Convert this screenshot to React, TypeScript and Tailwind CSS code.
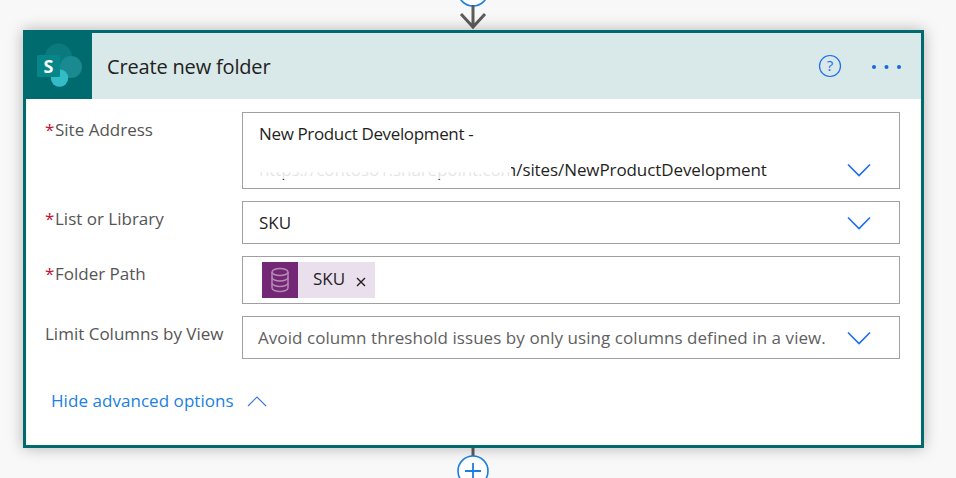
import React from "react";

const font = { fontFamily: '"Open Sans","Noto Sans",sans-serif' };

function Chevron() {
  return (
    <svg width="24" height="14" viewBox="0 0 24 14" className="shrink-0" fill="none">
      <path d="M1 1.5 L12 12.5 L23 1.5" stroke="#1a6df0" strokeWidth="1.6" />
    </svg>
  );
}

function Label({ text, required }: { text: string; required?: boolean }) {
  return (
    <div className="w-[197px] shrink-0 flex items-start text-[17px] leading-[24px] text-[#555555]">
      {required && <span className="text-[#c8102e] w-[10px]">*</span>}
      <span>{text}</span>
    </div>
  );
}

function SharePointLogo() {
  return (
    <svg width="66" height="66" viewBox="0 0 66 66" className="block">
      <circle cx="32.5" cy="24" r="13.5" fill="#0a7a7e" />
      <circle cx="45" cy="34" r="11" fill="#1a8a90" />
      <circle cx="33.5" cy="45" r="8.7" fill="#33bcc6" />
      <rect x="11" y="22" width="23" height="22" rx="1.5" fill="#07868a" />
      <text x="22.5" y="39.5" textAnchor="middle" fontSize="18" fontWeight="700" fill="#ffffff" fontFamily="Open Sans">S</text>
    </svg>
  );
}

export default function App() {
  return (
    <div className="w-[956px] h-[478px] bg-[#f8f8f8] overflow-hidden flex flex-col items-start pl-[23px]" style={font}>
      <svg width="901" height="30" viewBox="0 0 901 30" className="shrink-0 block">
        <circle cx="450" cy="-9" r="15" fill="#fff" stroke="#1a7fe0" strokeWidth="1.6" />
        <path d="M450 5 V28 M438 14 L450 27 L462 14" stroke="#5c5c5c" strokeWidth="3" fill="none" />
      </svg>

      <div className="w-[901px] h-[418px] shrink-0 border-[3px] border-[#006b6e] bg-white shadow-[0_0_14px_rgba(0,0,0,0.28)] flex flex-col relative">
        <div className="h-[66px] shrink-0 bg-[#d9e8e8] flex items-center">
          <div className="w-[66px] h-[66px] bg-[#006b6e]">
            <SharePointLogo />
          </div>
          <div className="ml-[15px] text-[20px] text-[#212121] flex-1 tracking-[-0.17px] pt-[2px]">Create new folder</div>
          <svg width="24" height="24" viewBox="0 0 24 24" className="mr-[29px]" fill="none">
            <circle cx="12" cy="12" r="10.5" stroke="#1a6df0" strokeWidth="1.2" />
            <text x="12" y="17" textAnchor="middle" fontSize="15" fill="#1a6df0" fontFamily="Open Sans">?</text>
          </svg>
          <svg width="32" height="6" viewBox="0 0 32 6" className="mr-[18px] mt-[2px]">
            <circle cx="3" cy="3" r="2" fill="#0f6cdc" />
            <circle cx="15.5" cy="3" r="2" fill="#0f6cdc" />
            <circle cx="28" cy="3" r="2" fill="#0f6cdc" />
          </svg>
        </div>

        <div className="flex flex-col gap-[12px] pt-[13px] pl-[19px] pr-[21px]">
          <div className="flex items-start">
            <div className="pt-[6px]"><Label text="Site Address" required /></div>
            <div className="w-[658px] h-[77px] border border-[#a0a0a0] pl-[16px] pr-[28px] flex flex-col justify-between relative">
              <div className="text-[17px] leading-[22px] mt-[10px] text-[#1f1f1f] tracking-[-0.36px]">New Product Development -</div>
              <div className="flex items-center justify-between mb-[7px]">
                <span className="text-[17px] leading-[22px] text-[#1f1f1f] tracking-[-0.09px]">https://contoso1.sharepoint.com/sites/NewProductDevelopment</span>
                <Chevron />
              </div>
              <div className="absolute left-[16px] top-[49px] w-[252px] h-[17px] bg-[linear-gradient(180deg,#fff_0%,#fff_55%,rgba(255,255,255,0.88)_65%,rgba(255,255,255,0.88)_100%)]" />
            </div>
          </div>

          <div className="flex items-start">
            <div className="pt-[6px]"><Label text="List or Library" required /></div>
            <div className="w-[658px] h-[43px] border border-[#a0a0a0] pl-[16px] pr-[28px] flex items-center justify-between">
              <span className="text-[17px] text-[#1f1f1f]">SKU</span>
              <Chevron />
            </div>
          </div>

          <div className="flex items-start">
            <div className="pt-[6px]"><Label text="Folder Path" required /></div>
            <div className="w-[658px] h-[48px] border border-[#a0a0a0] pl-[19px] flex items-center">
              <div className="h-[36px] bg-[#eadfec] flex items-center">
                <div className="w-[36px] h-[36px] bg-[#742774] flex items-center justify-center">
                  <svg width="20" height="26" viewBox="0 0 20 26" fill="none" stroke="#b48cb4" strokeWidth="1.5">
                    <ellipse cx="10" cy="5" rx="8" ry="3.5" />
                    <path d="M2 5 V21 C2 23 6 24.5 10 24.5 C14 24.5 18 23 18 21 V5" />
                    <path d="M2 10.5 C2 12.5 6 14 10 14 C14 14 18 12.5 18 10.5" />
                    <path d="M2 16 C2 18 6 19.5 10 19.5 C14 19.5 18 18 18 16" />
                  </svg>
                </div>
                <span className="ml-[15px] text-[17px] leading-[22px] text-[#1f1f1f] mb-[3px]">SKU</span>
                <svg width="10" height="10" viewBox="0 0 10 10" className="ml-[11px] mr-[9px] mt-[3px]" stroke="#1f1f1f" strokeWidth="1.4">
                  <path d="M1 1 L9 9 M9 1 L1 9" />
                </svg>
              </div>
            </div>
          </div>

          <div className="flex items-start">
            <div className="pt-[6px]"><Label text="Limit Columns by View" /></div>
            <div className="w-[658px] h-[43px] border border-[#a0a0a0] pl-[15px] pr-[28px] flex items-center justify-between">
              <span className="text-[17px] text-[#5f5f5f] tracking-[0.06px] whitespace-nowrap">Avoid column threshold issues by only using columns defined in a view.</span>
              <Chevron />
            </div>
          </div>
        </div>

        <div className="flex items-center pl-[25px] mt-[30px]">
          <span className="text-[17px] leading-[24px] text-[#1b7fe3] tracking-[0.05px]">Hide advanced options</span>
          <svg width="20" height="11" viewBox="0 0 20 11" className="ml-[13px]" fill="none">
            <path d="M1 10 L10 1 L19 10" stroke="#3f78e0" strokeWidth="1.2" />
          </svg>
        </div>
      </div>

      <svg width="901" height="30" viewBox="0 0 901 30" className="shrink-0 block">
        <path d="M450 0 V8" stroke="#5c5c5c" strokeWidth="3" />
        <circle cx="450" cy="23" r="15" fill="#fff" stroke="#1a7fe0" strokeWidth="1.6" />
        <path d="M450 15 V30 M442 23 H458" stroke="#1a7fe0" strokeWidth="1.8" />
      </svg>
    </div>
  );
}
